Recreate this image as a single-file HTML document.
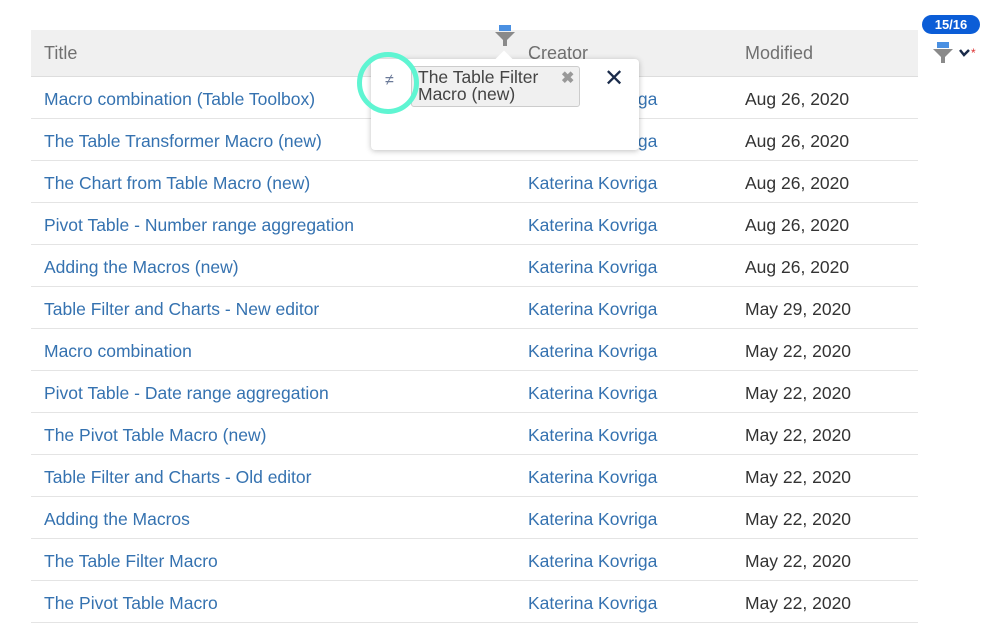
<!DOCTYPE html>
<html><head><style>
body{margin:0;width:999px;height:630px;background:#fff;font-family:"Liberation Sans",sans-serif;position:relative;overflow:hidden}
.hdr{position:absolute;left:31px;top:30px;width:887px;height:46px;background:#f0f0f0;border-bottom:1px solid #ddd}
.h{position:absolute;top:43px;font-size:18px;color:#707070}
.row{position:absolute;left:31px;width:887px;height:41px;border-bottom:1px solid #e4e4e4}
.row span{position:absolute;top:12px;font-size:17.5px;white-space:nowrap}
.t{left:13px;color:#3572b0}.c{left:497px;color:#3572b0}.m{left:714px;color:#333}
.pop{position:absolute;left:371px;top:59px;width:268px;height:91px;background:#fff;border-radius:4px;box-shadow:0 1px 6px rgba(0,0,0,.25)}
</style></head><body>
<div class="hdr"></div>
<div class="h" style="left:44px">Title</div>
<div class="h" style="left:528px">Creator</div>
<div class="h" style="left:745px">Modified</div>
<div class="row" style="top:77px"><span class="t">Macro combination (Table Toolbox)</span><span class="c">Katerina Kovriga</span><span class="m">Aug 26, 2020</span></div>
<div class="row" style="top:119px"><span class="t">The Table Transformer Macro (new)</span><span class="c">Katerina Kovriga</span><span class="m">Aug 26, 2020</span></div>
<div class="row" style="top:161px"><span class="t">The Chart from Table Macro (new)</span><span class="c">Katerina Kovriga</span><span class="m">Aug 26, 2020</span></div>
<div class="row" style="top:203px"><span class="t">Pivot Table - Number range aggregation</span><span class="c">Katerina Kovriga</span><span class="m">Aug 26, 2020</span></div>
<div class="row" style="top:245px"><span class="t">Adding the Macros (new)</span><span class="c">Katerina Kovriga</span><span class="m">Aug 26, 2020</span></div>
<div class="row" style="top:287px"><span class="t">Table Filter and Charts - New editor</span><span class="c">Katerina Kovriga</span><span class="m">May 29, 2020</span></div>
<div class="row" style="top:329px"><span class="t">Macro combination</span><span class="c">Katerina Kovriga</span><span class="m">May 22, 2020</span></div>
<div class="row" style="top:371px"><span class="t">Pivot Table - Date range aggregation</span><span class="c">Katerina Kovriga</span><span class="m">May 22, 2020</span></div>
<div class="row" style="top:413px"><span class="t">The Pivot Table Macro (new)</span><span class="c">Katerina Kovriga</span><span class="m">May 22, 2020</span></div>
<div class="row" style="top:455px"><span class="t">Table Filter and Charts - Old editor</span><span class="c">Katerina Kovriga</span><span class="m">May 22, 2020</span></div>
<div class="row" style="top:497px"><span class="t">Adding the Macros</span><span class="c">Katerina Kovriga</span><span class="m">May 22, 2020</span></div>
<div class="row" style="top:539px"><span class="t">The Table Filter Macro</span><span class="c">Katerina Kovriga</span><span class="m">May 22, 2020</span></div>
<div class="row" style="top:581px"><span class="t">The Pivot Table Macro</span><span class="c">Katerina Kovriga</span><span class="m">May 22, 2020</span></div>

<svg style="position:absolute;left:494px;top:25px" width="22" height="22" viewBox="0 0 22 22"><rect x="5" y="0" width="12" height="6" fill="#4a90e2"/><path d="M1 7H21L13 15V21H9V15Z" fill="#8a8a8a"/></svg>
<div class="pop"><div style="position:absolute;left:127px;top:-6px;width:12px;height:12px;background:#fff;transform:rotate(45deg)"></div></div>
<div style="position:absolute;left:411px;top:66px;width:167px;height:39px;background:#f0f0f0;border:1px solid #ccc;border-radius:3px"></div>
<div style="position:absolute;left:418px;top:69px;font-size:17.5px;line-height:17px;color:#444">The Table Filter<br>Macro (new)</div>
<div style="position:absolute;left:561px;top:68px;font-size:16px;color:#999;font-weight:bold">✖</div>
<div style="position:absolute;left:604px;top:64px;font-size:24px;color:#1a2b4a">✕</div>
<div style="position:absolute;left:357px;top:52px;width:52px;height:52px;border:5px solid #5ff5d2;border-radius:50%"></div>
<div style="position:absolute;left:385px;top:72px;font-size:16px;color:#6b7a99">≠</div>

<div style="position:absolute;left:922px;top:15px;width:58px;height:19px;background:#0b5dd7;border-radius:10px;color:#fff;font-size:13px;font-weight:bold;text-align:center;line-height:19px">15/16</div>
<svg style="position:absolute;left:932px;top:42px" width="22" height="22" viewBox="0 0 22 22"><rect x="5" y="0" width="12" height="6" fill="#4a90e2"/><path d="M1 7H21L13 15V21H9V15Z" fill="#8a8a8a"/></svg>
<svg style="position:absolute;left:959px;top:46px" width="20" height="12"><path d="M1 4L5 9L10 4" stroke="#1a2b4a" stroke-width="2.5" fill="none"/><text x="12" y="11" font-size="12" fill="#d33">*</text></svg>
</body></html>
